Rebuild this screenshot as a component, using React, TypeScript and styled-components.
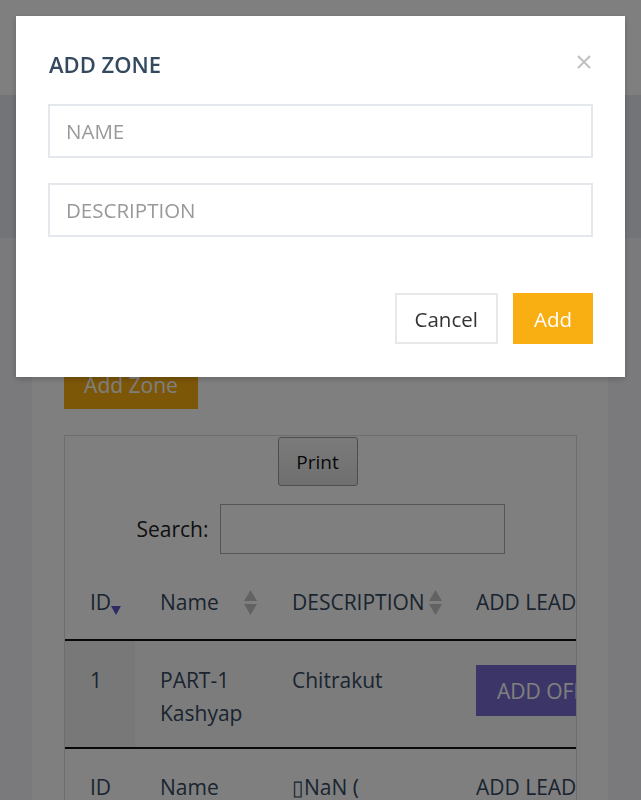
import React from 'react'
import styled, { createGlobalStyle } from 'styled-components'

const GlobalStyle = createGlobalStyle`
  html, body {
    margin: 0;
    padding: 0;
    background: #f4f5f9;
    font-family: 'Open Sans', 'Liberation Sans', sans-serif;
  }
  * { box-sizing: border-box; }
`

// Page underneath the modal
const TopBar = styled.div`
  height: 95px;
  background: #ffffff;
`

const Banner = styled.div`
  height: 143px;
  background: #e6e8ef;
`

const Content = styled.div`
  padding: 32px 33px 0 32px;
`

const Card = styled.div`
  background: #ffffff;
  padding: 90px 31px 40px 32px;
`

const ZoneButton = styled.button`
  display: block;
  width: 134px;
  height: 49px;
  border: none;
  background: #f9ae11;
  color: #ffffff;
  font-family: inherit;
  font-size: 21px;
  cursor: pointer;
`

const TableWrap = styled.div`
  margin-top: 26px;
  border: 1px solid #dcdcdc;
  overflow: hidden;
`

const Toolbar = styled.div`
  display: flex;
  flex-direction: column;
  align-items: center;
  padding-top: 1px;
`

const PrintButton = styled.button`
  width: 80px;
  height: 49px;
  margin-left: -6px;
  border: 1px solid #9a9a9a;
  border-radius: 3px;
  background: linear-gradient(#f6f6f6, #dedede);
  color: #111;
  font-family: inherit;
  font-size: 19px;
`

const SearchRow = styled.label`
  display: flex;
  align-items: center;
  gap: 11px;
  margin-top: 18px;
  font-size: 21px;
  color: #222;
`

const SearchInput = styled.input`
  width: 285px;
  height: 50px;
  border: 1px solid #aaa;
  background: #fff;
`

const Table = styled.table`
  width: 720px;
  table-layout: fixed;
  border-collapse: collapse;
  margin-top: 18px;
  font-size: 21px;
  color: #34495e;
`

const HeadCell = styled.th`
  position: relative;
  text-align: left;
  font-weight: 400;
  padding: 15px 10px 22px 25px;
  line-height: 30px;
  border-bottom: 2px solid #111;
  white-space: nowrap;
`

const SortIcon = styled.svg<{ $right: number; $top: number }>`
  position: absolute;
  right: ${p => p.$right}px;
  top: ${p => p.$top}px;
`

const Row = styled.tr<{ $odd?: boolean }>`
  background: ${p => (p.$odd ? '#f9f9f9' : '#ffffff')};
`

const Cell = styled.td<{ $sorted?: boolean }>`
  vertical-align: top;
  padding: 23px 25px 17px 25px;
  line-height: 33px;
  background: ${p => (p.$sorted ? '#f1f1f1' : 'transparent')};
  border-bottom: 2px solid #111;
`

const FootCell = styled.td`
  vertical-align: top;
  padding: 22px 25px 16px 25px;
  line-height: 33px;
  white-space: nowrap;
`

const OfferButton = styled.button`
  height: 51px;
  margin-top: 1px;
  padding: 0 21px;
  border: none;
  background: #786dd0;
  color: #ffffff;
  font-family: inherit;
  font-size: 21px;
  white-space: nowrap;
`

// Modal
const Overlay = styled.div`
  position: fixed;
  inset: 0;
  background: rgba(0, 0, 0, 0.5);
`

const Dialog = styled.div`
  position: absolute;
  left: 16px;
  top: 16px;
  width: 609px;
  background: #ffffff;
  padding: 34px 32px 33px 32px;
  box-shadow: 0 2px 6px rgba(0, 0, 0, 0.2);
`

const DialogHeader = styled.div`
  display: flex;
  align-items: center;
  justify-content: space-between;
  height: 29px;
`

const Title = styled.h4`
  margin: -2px 0 0 1px;
  font-size: 22px;
  font-weight: 600;
  color: #34495e;
`

const CloseButton = styled.button`
  border: none;
  background: none;
  padding: 0;
  margin-right: 2px;
  margin-top: -6px;
  display: flex;
  cursor: pointer;
`

const Field = styled.input`
  display: block;
  width: 100%;
  height: 54px;
  margin-top: 25px;
  padding: 0 16px;
  border: 2px solid #e4e8ec;
  font-family: inherit;
  font-size: 20.5px;
  color: #333;
  outline: none;
  &::placeholder {
    color: #999;
  }
`

const Actions = styled.div`
  display: flex;
  justify-content: flex-end;
  gap: 15px;
  margin-top: 56px;
`

const ActionButton = styled.button<{ $primary?: boolean }>`
  height: 51px;
  padding: 0 ${p => (p.$primary ? '19px' : '18px')};
  border: 2px solid ${p => (p.$primary ? '#f9ae11' : '#e8e8e8')};
  background: ${p => (p.$primary ? '#f9ae11' : '#ffffff')};
  color: ${p => (p.$primary ? '#ffffff' : '#333333')};
  font-family: inherit;
  font-size: 20.5px;
  cursor: pointer;
`

const BothArrows = ({ right }: { right: number }) => (
  <SortIcon $right={right} $top={18} width="13" height="25" viewBox="0 0 13 25">
    <path d="M6.5 0 L13 11 H0 Z" fill="#c4c4c4" />
    <path d="M6.5 25 L13 14 H0 Z" fill="#c4c4c4" />
  </SortIcon>
)

export default function App() {
  return (
    <>
      <GlobalStyle />
      <TopBar />
      <Banner />
      <Content>
        <Card>
          <ZoneButton>Add Zone</ZoneButton>
          <TableWrap>
            <Toolbar>
              <PrintButton>Print</PrintButton>
              <SearchRow>
                Search:
                <SearchInput type="search" />
              </SearchRow>
            </Toolbar>
            <Table>
              <colgroup>
                <col style={{ width: 70 }} />
                <col style={{ width: 132 }} />
                <col style={{ width: 184 }} />
                <col style={{ width: 334 }} />
              </colgroup>
              <thead>
                <tr>
                  <HeadCell>
                    ID
                    <SortIcon $right={14} $top={34} width="10" height="9" viewBox="0 0 10 9">
                      <path d="M0 0 H10 L5 9 Z" fill="#5a55c8" />
                    </SortIcon>
                  </HeadCell>
                  <HeadCell>
                    Name
                    <BothArrows right={10} />
                  </HeadCell>
                  <HeadCell>
                    DESCRIPTION
                    <BothArrows right={9} />
                  </HeadCell>
                  <HeadCell>ADD LEAD OFFER</HeadCell>
                </tr>
              </thead>
              <tbody>
                <Row $odd>
                  <Cell $sorted>1</Cell>
                  <Cell>PART-1 Kashyap</Cell>
                  <Cell>Chitrakut</Cell>
                  <Cell>
                    <OfferButton>ADD OFFER</OfferButton>
                  </Cell>
                </Row>
              </tbody>
              <tfoot>
                <tr>
                  <FootCell>ID</FootCell>
                  <FootCell>Name</FootCell>
                  <FootCell>{'\u25AFNaN ('}</FootCell>
                  <FootCell>ADD LEAD OFFER</FootCell>
                </tr>
              </tfoot>
            </Table>
          </TableWrap>
        </Card>
      </Content>
      <Overlay>
        <Dialog>
          <DialogHeader>
            <Title>ADD ZONE</Title>
            <CloseButton aria-label="close">
              <svg width="14" height="14" viewBox="0 0 14 14">
                <path d="M1 1 L13 13 M13 1 L1 13" stroke="#c0c0c0" strokeWidth="2" />
              </svg>
            </CloseButton>
          </DialogHeader>
          <Field placeholder="NAME" />
          <Field placeholder="DESCRIPTION" />
          <Actions>
            <ActionButton>Cancel</ActionButton>
            <ActionButton $primary>Add</ActionButton>
          </Actions>
        </Dialog>
      </Overlay>
    </>
  )
}
